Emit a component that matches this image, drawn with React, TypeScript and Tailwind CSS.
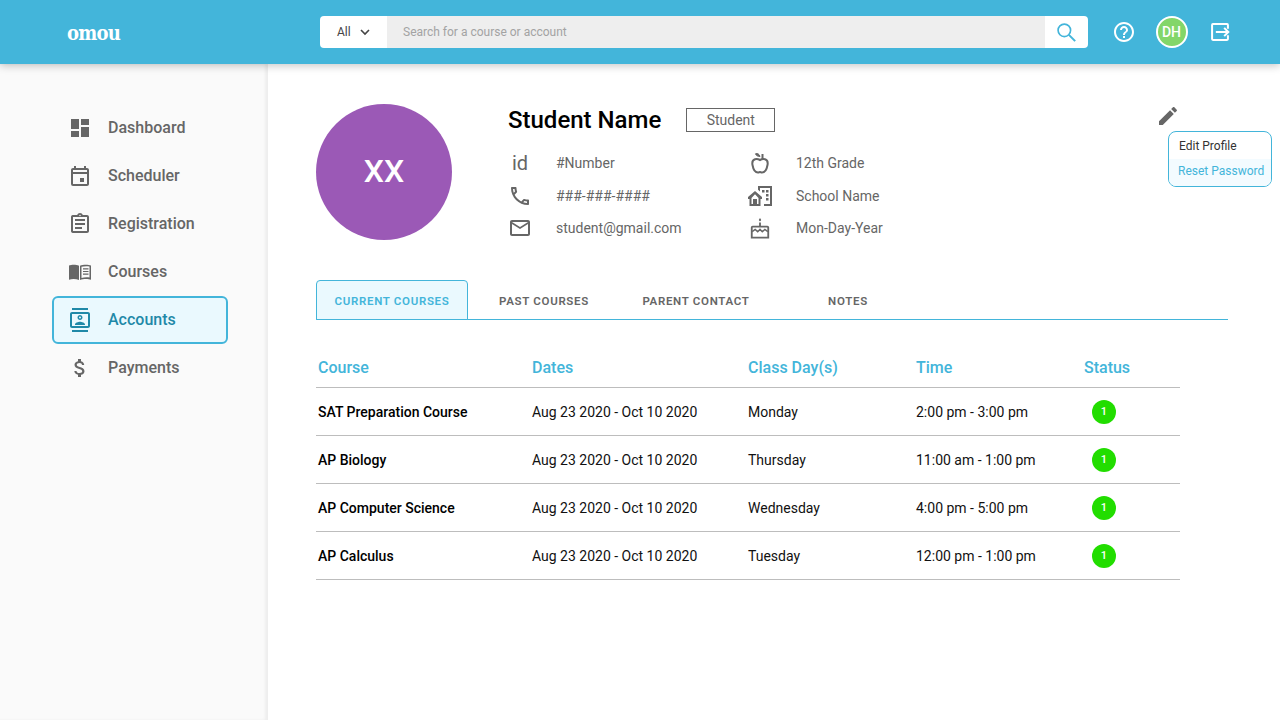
const ROWS = [
  { course: "SAT Preparation Course", day: "Monday", time: "2:00 pm - 3:00 pm" },
  { course: "AP Biology", day: "Thursday", time: "11:00 am - 1:00 pm" },
  { course: "AP Computer Science", day: "Wednesday", time: "4:00 pm - 5:00 pm" },
  { course: "AP Calculus", day: "Tuesday", time: "12:00 pm - 1:00 pm" },
];

const NAV = [
  { label: "Dashboard", path: "M3 13h8V3H3v10zm0 8h8v-6H3v6zm10 0h8V11h-8v10zm0-18v6h8V3h-8z" },
  { label: "Scheduler", path: "M19 4h-1V2h-2v2H8V2H6v2H5c-1.11 0-1.99.9-1.99 2L3 20a2 2 0 0 0 2 2h14c1.1 0 2-.9 2-2V6c0-1.1-.9-2-2-2zm0 16H5V10h14v10zm0-12H5V6h14v2zM12 14h4v4h-4z" },
  { label: "Registration", path: "M7 15h7v2H7zm0-4h10v2H7zm0-4h10v2H7zm12-4h-4.18C14.4 1.84 13.3 1 12 1c-1.3 0-2.4.84-2.82 2H5c-.14 0-.27.01-.4.04-.39.08-.74.28-1.01.55-.18.18-.33.4-.43.64-.1.23-.16.49-.16.77v14c0 .27.06.54.16.78s.25.45.43.64c.27.27.62.47 1.01.55.13.02.26.03.4.03h14c1.1 0 2-.9 2-2V5c0-1.1-.9-2-2-2zm-7-.25c.41 0 .75.34.75.75s-.34.75-.75.75-.75-.34-.75-.75.34-.75.75-.75zM19 19H5V5h14v14z" },
  { label: "Courses", path: "M1 5.500c2.500-1 7-1.200 10 .3V20c-3-1.300-7.500-1.200-10-.3V5.500zM12 5.800c3-1.500 8.500-1.300 11-.3v14.200c-2.500-.9-8-1-11 .3V5.800zm1.500 1v11.200c2.300-.7 5.800-.8 8-.4V6.600c-2.200-.5-5.700-.4-8 .2zm1.500 1.500h5.500v1.200H15zm0 2.600h5.500v1.200H15zm0 2.600h5.500v1.200H15z" },
  { label: "Accounts", path: "M20 0H4v2h16V0zM4 24h16v-2H4v2zM20 4H4c-1.100 0-2 .9-2 2v12c0 1.100.9 2 2 2h16c1.100 0 2-.9 2-2V6c0-1.100-.9-2-2-2zm0 14H4V6h16v12zM12 12c1.380 0 2.500-1.120 2.500-2.500S13.380 7 12 7 9.500 8.120 9.500 9.500 10.620 12 12 12zm0-3.500a1 1 0 1 1 0 2 1 1 0 0 1 0-2zM17 16.500c0-1.800-3.300-2.800-5-2.800s-5 1-5 2.800V17h10v-.5z" },
  { label: "Payments", path: "M11.800 10.900c-2.270-.59-3-1.200-3-2.150 0-1.090 1.010-1.850 2.700-1.850 1.780 0 2.440.85 2.500 2.100h2.210c-.07-1.720-1.120-3.300-3.210-3.810V3h-3v2.160c-1.940.42-3.500 1.680-3.500 3.610 0 2.310 1.910 3.460 4.700 4.130 2.500.6 3 1.480 3 2.410 0 .69-.49 1.790-2.700 1.790-2.060 0-2.870-.92-2.980-2.100h-2.200c.12 2.190 1.760 3.420 3.680 3.830V21h3v-2.150c1.950-.37 3.500-1.500 3.500-3.550 0-2.840-2.430-3.810-4.700-4.400z" },
];

function Icon({ path, className }: { path: string; className?: string }) {
  return (
    <svg viewBox="0 0 24 24" className={className} fill="currentColor">
      <path d={path} />
    </svg>
  );
}

function Apple() {
  return (
    <svg viewBox="0 0 24 24" className="w-6 h-6 text-[#666]" fill="none" stroke="currentColor" strokeWidth="2">
      <path d="M12 9c-1.500-.8-3.500-1.200-5-.7C4.500 9.100 4 11.500 4.500 14c.6 3.500 2.500 7.500 5.500 7.500 1 0 1.300-.4 2-.4s1 .4 2 .4c3 0 4.900-4 5.500-7.500.5-2.500 0-4.900-2.500-5.700-1.500-.5-3.500-.1-5 .7z" />
      <path d="M14.500 8.500V3" />
      <path d="M12 5.500C10 5.500 8.200 4.800 7.500 2.800 9.500 2 11.500 3.300 12 5.500z" fill="currentColor" strokeWidth="1" />
    </svg>
  );
}

function HomeCity() {
  return (
    <svg viewBox="0 0 24 24" className="w-6 h-6 text-[#666]" fill="currentColor">
      <path d="M0 13l7-6 7 6v2h-1.500v7H1.500v-7H0v-2zm3.500 1v6h1.500v-5h4v5h1.500v-6L7 10.300 3.500 14z" />
      <path d="M10 2h14v20h-8v-2h6V4H12v3.500l-2-1.700V2zm4 4h2.500v2.500H14zm4 0h2.500v2.500H18zm0 4h2.500v2.500H18zm0 4h2.500v2.500H18z" />
    </svg>
  );
}

function Cake() {
  return (
    <svg viewBox="0 0 24 24" className="w-[22px] h-[22px] text-[#666]" fill="none" stroke="currentColor" strokeWidth="2">
      <path d="M12 1c.9 1.200 1.200 1.800 1.200 2.400a1.200 1.200 0 0 1-2.400 0c0-.6.3-1.200 1.200-2.400z" fill="currentColor" stroke="none" />
      <path d="M12 6v4" />
      <path d="M4 10.500h16a1 1 0 0 1 1 1V22.500H3V11.500a1 1 0 0 1 1-1z" />
      <path d="M3.500 16l3.200-2.500 2.800 2.500 2.500-2.500 2.500 2.500 2.800-2.500 3.200 2.500" strokeWidth="1.600" />
    </svg>
  );
}

function InfoRow({ icon, text }: { icon: React.ReactNode; text: string }) {
  return (
    <div className="flex items-center h-[32px] first:h-[34px]">
      <div className="w-6 h-6 flex items-center justify-center">{icon}</div>
      <span className="ml-[24px] text-sm text-[#666]">{text}</span>
    </div>
  );
}

export default function App() {
  return (
    <div className="h-screen overflow-hidden flex flex-col bg-white font-['Roboto',sans-serif]">
      <header className="relative z-20 h-16 shrink-0 bg-[#43b5da] flex items-center shadow-[0_2px_8px_rgba(0,0,0,0.22)]">
        <div className="w-[320px] pl-[67px] pt-[2px] text-[20px] leading-none font-bold text-white font-['DejaVu_Serif_Condensed','DejaVu_Serif',serif] tracking-[-0.8px]">
          omou
        </div>
        <div className="w-[768px] h-8 flex rounded overflow-hidden">
          <div className="w-[67px] bg-white flex items-center pl-[17px] gap-[6px] text-xs text-[#444]">
            All
            <svg viewBox="0 0 24 24" className="w-4 h-4" fill="none" stroke="#444" strokeWidth="2.400">
              <path d="M6 9l6 6 6-6" />
            </svg>
          </div>
          <div className="flex-1 bg-[#eeeeee] flex items-center pl-4 text-xs text-[#a3a3a3]">
            Search for a course or account
          </div>
          <div className="w-[43px] bg-white flex items-center justify-center">
            <svg viewBox="0 0 24 24" className="w-5 h-5 -ml-px" fill="none" stroke="#43b5da" strokeWidth="2">
              <circle cx="10" cy="10" r="7.500" />
              <path d="M15.500 15.500L23 23" strokeWidth="2.400" />
            </svg>
          </div>
        </div>
        <div className="flex items-center ml-[24px]">
          <Icon
            className="w-6 h-6 text-white"
            path="M11 18h2v-2h-2v2zm1-16C6.480 2 2 6.480 2 12s4.480 10 10 10 10-4.480 10-10S17.520 2 12 2zm0 18c-4.410 0-8-3.590-8-8s3.590-8 8-8 8 3.590 8 8-3.590 8-8 8zm0-14c-2.210 0-4 1.790-4 4h2c0-1.100.9-2 2-2s2 .9 2 2c0 2-3 1.750-3 5h2c0-2.250 3-2.500 3-5 0-2.210-1.790-4-4-4z"
          />
          <div className="ml-5 w-8 h-8 pr-px rounded-full bg-[#83d669] border-2 border-white flex items-center justify-center text-sm font-medium text-white">
            DH
          </div>
          <svg viewBox="0 0 24 24" className="ml-[22px] w-5 h-5" fill="none" stroke="white" strokeWidth="2.400">
            <path d="M21.500 8V3.500a1 1 0 0 0-1-1H3.500a1 1 0 0 0-1 1v17a1 1 0 0 0 1 1h17a1 1 0 0 0 1-1V16" />
            <path d="M7 12h15M17 7l5 5-5 5" />
          </svg>
        </div>
      </header>

      <div className="flex flex-1 min-h-0">
        <aside className="w-[268px] shrink-0 bg-[#fafafa] pt-10 pl-[52px] shadow-[inset_-3px_0_3px_rgba(0,0,0,0.05)]">
          {NAV.map((item) => {
            const active = item.label === "Accounts";
            return (
              <div
                key={item.label}
                className={
                  active
                    ? "w-[176px] h-12 flex items-center pl-[14px] rounded-[6px] border-2 border-[#43b5da] bg-[#eaf9fe] text-[#1f89a8]"
                    : "w-[176px] h-12 flex items-center pl-4 text-[#666]"
                }
              >
                <Icon path={item.path} className="w-6 h-6 shrink-0" />
                <span className="ml-4 text-base font-medium">{item.label}</span>
              </div>
            );
          })}
        </aside>

        <main className="relative flex-1 pt-10 pl-12 pr-[52px]">
          <div className="flex h-[136px]">
            <div className="w-[136px] h-[136px] pb-[2px] rounded-full bg-[#9b59b6] flex items-center justify-center text-[32px] font-medium text-white">
              XX
            </div>
            <div className="ml-14">
              <div className="flex items-center h-8 mt-0">
                <h1 className="text-2xl font-medium text-black">Student Name</h1>
                <span className="ml-[25px] w-[89px] h-6 border border-[#666] flex items-center justify-center text-sm text-[#666]">
                  Student
                </span>
              </div>
              <div className="flex mt-[10px]">
                <div className="w-[240px] flex flex-col">
                  <InfoRow
                    icon={<span className="text-[20px] leading-none text-[#666]">id</span>}
                    text="#Number"
                  />
                  <InfoRow
                    icon={
                      <Icon
                        className="w-6 h-6 text-[#666]"
                        path="M6.540 5c.06.89.21 1.760.45 2.590l-1.200 1.200c-.41-1.200-.67-2.470-.76-3.790h1.510m9.860 12.020c.85.24 1.720.39 2.600.45v1.490c-1.320-.09-2.590-.35-3.800-.75l1.200-1.190M7.500 3H4c-.55 0-1 .45-1 1 0 9.390 7.610 17 17 17 .55 0 1-.45 1-1v-3.490c0-.55-.45-1-1-1-1.240 0-2.450-.2-3.570-.57-.1-.04-.21-.05-.31-.05-.26 0-.51.1-.71.29l-2.200 2.200c-2.830-1.450-5.150-3.760-6.590-6.590l2.200-2.200c.28-.28.36-.67.25-1.020C8.700 6.450 8.500 5.250 8.500 4c0-.55-.45-1-1-1z"
                      />
                    }
                    text="###-###-####"
                  />
                  <InfoRow
                    icon={
                      <Icon
                        className="w-6 h-6 text-[#666]"
                        path="M22 6c0-1.100-.9-2-2-2H4c-1.100 0-2 .9-2 2v12c0 1.100.9 2 2 2h16c1.100 0 2-.9 2-2V6zm-2 0l-8 5-8-5h16zm0 12H4V8l8 5 8-5v10z"
                      />
                    }
                    text="student@gmail.com"
                  />
                </div>
                <div className="flex flex-col">
                  <InfoRow icon={<Apple />} text="12th Grade" />
                  <InfoRow icon={<HomeCity />} text="School Name" />
                  <InfoRow icon={<Cake />} text="Mon-Day-Year" />
                </div>
              </div>
            </div>
          </div>

          <div className="absolute top-10 left-[888px]">
            <Icon
              className="absolute top-0 left-0 w-6 h-6 text-[#666]"
              path="M3 17.250V21h3.750L17.810 9.940l-3.750-3.750L3 17.250zM20.710 7.040c.39-.39.39-1.020 0-1.410l-2.340-2.340c-.39-.39-1.020-.39-1.410 0l-1.830 1.830 3.750 3.750 1.830-1.830z"
            />
            <div className="absolute top-[27px] left-[12px] w-[104px] h-[56px] rounded-lg border border-[#43b5da] bg-white overflow-hidden text-xs">
              <div className="h-[27px] pl-[10px] flex items-center text-[#333]">Edit Profile</div>
              <div className="h-[27px] pl-[9px] pb-[3px] flex items-center bg-[#f3fbff] text-[#43b5da]">Reset Password</div>
            </div>
          </div>

          <div className="mt-10 flex border-b border-[#43b5da] h-10 text-[11.5px] font-semibold tracking-[0.06em] text-[#666]">
            <div className="w-[152px] h-10 pt-1 flex items-center justify-center rounded-t border border-[#43b5da] bg-[#eaf9fe] text-[#43b5da]">
              CURRENT COURSES
            </div>
            <div className="w-[152px] pt-[5px] flex items-center justify-center">PAST COURSES</div>
            <div className="w-[152px] pt-[5px] flex items-center justify-center">PARENT CONTACT</div>
            <div className="w-[152px] pt-[5px] flex items-center justify-center">NOTES</div>
          </div>

          <div className="mt-5 w-[864px]">
            <div className="grid grid-cols-[214px_216px_168px_168px_1fr] pl-[2px] pt-2 h-12 items-center border-b border-[#bdbdbd] text-base font-medium text-[#43b5da]">
              <div>Course</div>
              <div>Dates</div>
              <div>Class Day(s)</div>
              <div>Time</div>
              <div>Status</div>
            </div>
            {ROWS.map((row) => (
              <div
                key={row.course}
                className="grid grid-cols-[214px_216px_168px_168px_1fr] pl-[2px] h-12 items-center border-b border-[#bdbdbd] text-sm text-[#111]"
              >
                <div className="font-medium text-black">{row.course}</div>
                <div>Aug 23 2020 - Oct 10 2020</div>
                <div>{row.day}</div>
                <div>{row.time}</div>
                <div className="pl-2">
                  <div className="w-6 h-6 rounded-full bg-[#22dd00] flex items-center justify-center text-[11px] font-medium text-white">
                    1
                  </div>
                </div>
              </div>
            ))}
          </div>
        </main>
      </div>
    </div>
  );
}
